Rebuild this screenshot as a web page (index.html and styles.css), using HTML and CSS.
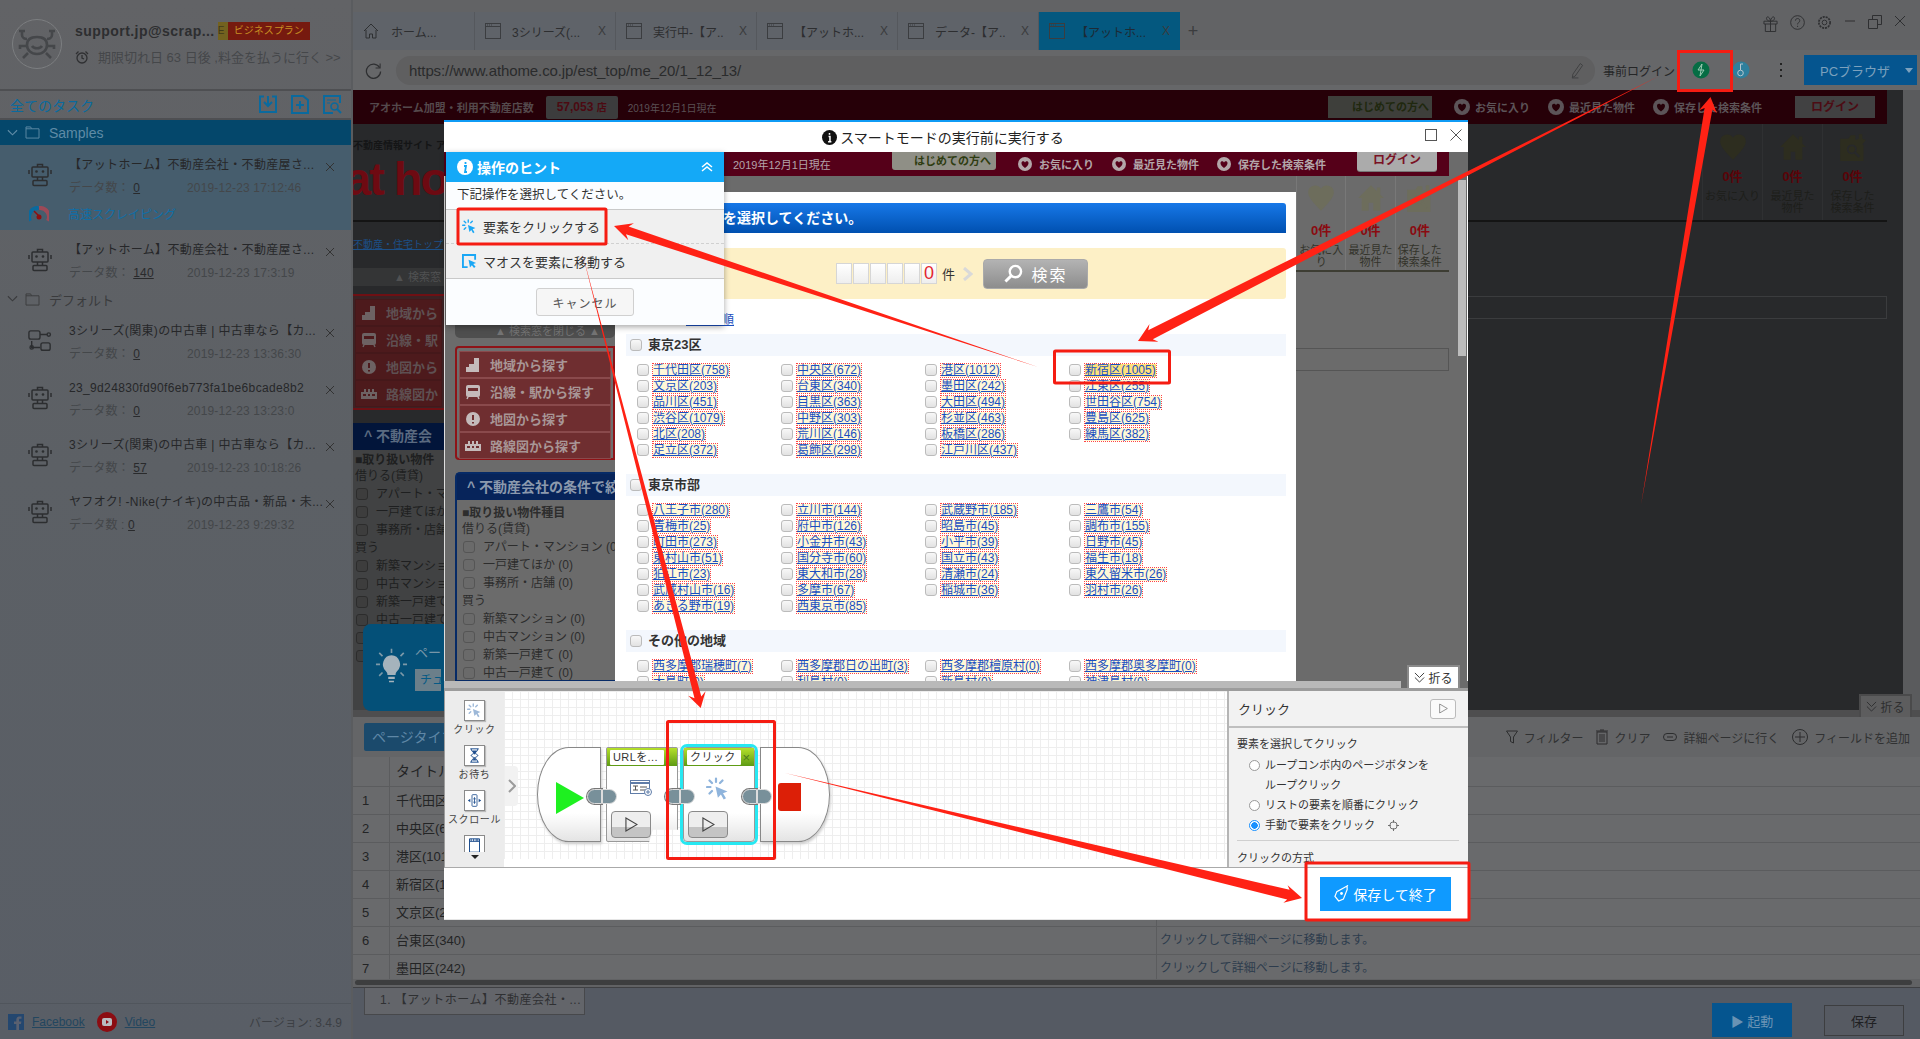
FILE: index.html
```html
<!DOCTYPE html>
<html lang="ja">
<head>
  <meta charset="UTF-8">
  <title>スマートモード</title>
  <link rel="stylesheet" href="styles.css">
</head>
<body>
  <svg class="defs" width="0" height="0">
    <symbol id="i-robot" viewBox="0 0 24 24"><g fill="none" stroke="currentColor" stroke-width="1.5"><path d="M9.5 4V1.500h5V4"/><rect x="4" y="4" width="16" height="10" rx="1"/><path d="M1 7v4M23 7v4M9.500 14v3.500M14.500 14v3.500"/><rect x="5" y="17.500" width="14" height="5" rx="1"/></g><circle cx="8.500" cy="8.500" r="1.300" fill="currentColor"/><circle cx="15" cy="8.500" r="1.300" fill="currentColor"/></symbol>
    <symbol id="i-flow" viewBox="0 0 26 24"><g fill="none" stroke="currentColor" stroke-width="1.500"><rect x="1" y="1" width="12" height="9" rx="2"/><path d="M13 5h8M4 12v7h9"/><circle cx="22.500" cy="5" r="1.800"/><circle cx="4" cy="19" r="1.800"/><rect x="14" y="14" width="10" height="8" rx="2"/></g></symbol>
    <symbol id="i-folder" viewBox="0 0 16 14"><path d="M1 1h5l1 2h8v10H1z" fill="none" stroke="currentColor"/><path d="M1 3h6" stroke="currentColor"/></symbol>
    <symbol id="i-close" viewBox="0 0 10 10"><path d="M1 1l8 8M9 1l-8 8" stroke="currentColor" fill="none"/></symbol>
    <symbol id="i-chev" viewBox="0 0 12 8"><path d="M1 1l5 5 5-5" stroke="currentColor" stroke-width="1.200" fill="none"/></symbol>
    <symbol id="i-dchev" viewBox="0 0 12 12"><path d="M1 1l5 5 5-5M1 6l5 5 5-5" stroke="currentColor" fill="none"/></symbol>
    <symbol id="i-page" viewBox="0 0 16 16"><rect x=".5" y=".5" width="15" height="15" fill="none" stroke="currentColor"/><path d="M.5 3.500h15" stroke="currentColor"/><path d="M2 2h1M4 2h1M6 2h1" stroke="currentColor"/></symbol>
    <symbol id="i-click" viewBox="0 0 24 24"><g stroke="currentColor" stroke-width="2.200" stroke-linecap="round" fill="none"><path d="M10 1.500v3.500M3.500 3.500l2.500 2.500M1 10h3.500M3.500 16.500l2.500-2.500M16.500 3.500L14 6"/></g><path d="M9.500 9.500l12 5-4.500 1.800 3 5-2.300 1.300-2.800-5-3 3.200z" fill="currentColor"/></symbol>
    <symbol id="i-play" viewBox="0 0 14 16"><path d="M1 1l12 7-12 7z" fill="none" stroke="currentColor" stroke-width="1.200"/></symbol>
    <symbol id="i-heart" viewBox="0 0 24 24"><path d="M12 23C6 16 1 12 1 7a6 6 0 0 1 11-3 6 6 0 0 1 11 3c0 5-5 9-11 16z" fill="currentColor"/></symbol>
    <symbol id="i-house" viewBox="0 0 24 24"><path d="M12 1L1 12h3v11h6v-7h4v7h6V12h3l-3-3V3h-3v3z" fill="currentColor"/></symbol>
    <symbol id="i-savedoc" viewBox="0 0 24 24"><path d="M1 5h7l2-3h4v4l3-1v-4h3v4l3 1-4 5v-1h2v14H1z" fill="currentColor"/><circle cx="11" cy="14" r="3.500" fill="none" stroke="var(--hole)" stroke-width="1.500"/><path d="M13.500 16.500l4 4" stroke="var(--hole)" stroke-width="2"/></symbol>
    <symbol id="i-round" viewBox="0 0 14 14"><circle cx="7" cy="7" r="7" fill="currentColor"/><path d="M7 11C4 9 3.500 7 3.500 6 3.500 4 6 3.500 7 5.500 8 3.500 10.500 4 10.500 6 10.500 7 10 9 7 11z" fill="var(--hole-head)"/></symbol>
    <symbol id="w-area" viewBox="0 0 16 16"><path d="M9 1h5v14H1v-5h3V7h5z" fill="currentColor"/></symbol>
    <symbol id="w-train" viewBox="0 0 16 16"><path d="M3 1h10a2 2 0 0 1 2 2v8a2 2 0 0 1-2 2H3a2 2 0 0 1-2-2V3a2 2 0 0 1 2-2z" fill="currentColor"/><path d="M3 4h10v3H3z" fill="var(--hole-way)"/><path d="M3 13l-1 2M13 13l1 2" stroke="currentColor" stroke-width="1.500"/></symbol>
    <symbol id="w-pin" viewBox="0 0 16 16"><circle cx="8" cy="8" r="7" fill="currentColor"/><path d="M8 4v5M8 11v1.500" stroke="var(--hole-way)" stroke-width="2"/></symbol>
    <symbol id="w-rail" viewBox="0 0 16 16"><path d="M0 6h16v7H0z" fill="currentColor"/><path d="M3 3h2v3H3zM7 3h2v3H7zM11 3h2v3h-2z" fill="currentColor"/><path d="M2 8h3v2H2zM7 8h2v2H7zM11 8h3v2h-3z" fill="var(--hole-way)"/></symbol>
  </svg>

  <div class="app">
    <aside class="sidebar">
      <div class="account">
        <div class="avatar">
          <svg viewBox="0 0 50 50" width="50" height="50"><circle cx="25" cy="25" r="24.500" fill="none" stroke="#7c7e80"/><g fill="none" stroke="#45474a" stroke-width="2.600"><path d="M15 26c0-5 3-8 10-8s10 3 10 8-4 9-10 9-10-4-10-9z"/><path d="M10 11v5c0 3 3 4 5 4M40 11v5c0 3-3 4-5 4M7 12h6M37 12h6M15 27H8v3M35 27h7v3M16 34l-5 5M34 34l5 5"/><path d="M20 27c2 3 8 3 10 0"/></g></svg>
        </div>
        <div class="account-info">
          <div class="account-name"><b>support.jp@scrap...</b><span class="plan"><i>E</i><em>ビジネスプラン</em></span></div>
          <div class="account-note">
            <svg viewBox="0 0 14 14" width="14" height="14"><circle cx="7" cy="8" r="5" fill="none" stroke="#2f3032" stroke-width="1.300"/><path d="M7 5v3l2 1M1 4l2.500-2.500M13 4l-2.500-2.500" stroke="#2f3032" stroke-width="1.300" fill="none"/></svg>
            <span>期限切れ日 63 日後 ,料金を払うに行く &gt;&gt;</span>
          </div>
        </div>
      </div>

      <div class="task-head">
        <span>全てのタスク</span>
        <div class="task-tools">
          <svg viewBox="0 0 20 19" width="20" height="19"><path d="M6 1.500H2v15.500h16V1.500h-4" fill="none" stroke="#0a6a9e" stroke-width="2"/><path d="M10 1v9M6 7l4 4 4-4" fill="none" stroke="#0a6a9e" stroke-width="2"/></svg>
          <svg viewBox="0 0 20 19" width="20" height="19"><path d="M2 1h11l5 4v13H2z" fill="none" stroke="#0a6a9e" stroke-width="2"/><path d="M10 6v8M6 10h8" stroke="#0a6a9e" stroke-width="2"/></svg>
          <svg viewBox="0 0 20 19" width="20" height="19"><path d="M18 8V1H2v17h9" fill="none" stroke="#0a6a9e" stroke-width="2"/><path d="M5 5h9M5 8h3" stroke="#0a6a9e"/><circle cx="12.500" cy="11.500" r="3.500" fill="none" stroke="#0a6a9e" stroke-width="1.600"/><path d="M15 14l4 4" stroke="#0a6a9e" stroke-width="2"/></svg>
        </div>
      </div>

      <div class="folder open"><svg class="chev"><use href="#i-chev"/></svg><svg class="folder-icon"><use href="#i-folder"/></svg><span>Samples</span></div>

      <div class="task selected">
        <svg class="task-icon"><use href="#i-robot"/></svg>
        <div class="task-title">【アットホーム】不動産会社・不動産屋さ...</div>
        <svg class="task-close"><use href="#i-close"/></svg>
        <div class="task-meta"><span class="task-count">データ数： <u>0</u></span><span class="task-date">2019-12-23 17:12:46</span></div>
        <div class="task-speed">
          <svg viewBox="0 0 20 16" width="20" height="16"><path d="M1 15a9 9 0 0 1 9-13" fill="none" stroke="#0a6a9e" stroke-width="4"/><path d="M10 2a9 9 0 0 1 9 13" fill="none" stroke="#9c4a58" stroke-width="4"/><path d="M5 5l6 6" stroke="#8e1010" stroke-width="1.500"/><circle cx="10" cy="11" r="2.500" fill="#8e1010"/></svg>
          <span>高速スクレイピング</span>
        </div>
      </div>
      <div class="task">
        <svg class="task-icon"><use href="#i-robot"/></svg>
        <div class="task-title">【アットホーム】不動産会社・不動産屋さ...</div>
        <svg class="task-close"><use href="#i-close"/></svg>
        <div class="task-meta"><span class="task-count">データ数： <u>140</u></span><span class="task-date">2019-12-23 17:3:19</span></div>
      </div>

      <div class="folder"><svg class="chev"><use href="#i-chev"/></svg><svg class="folder-icon"><use href="#i-folder"/></svg><span>デフォルト</span></div>

      <div class="task">
        <svg class="task-icon"><use href="#i-flow"/></svg>
        <div class="task-title">3シリーズ(関東)の中古車 | 中古車なら【カ...</div>
        <svg class="task-close"><use href="#i-close"/></svg>
        <div class="task-meta"><span class="task-count">データ数： <u>0</u></span><span class="task-date">2019-12-23 13:36:30</span></div>
      </div>
      <div class="task">
        <svg class="task-icon"><use href="#i-robot"/></svg>
        <div class="task-title">23_9d24830fd90f6eb773fa1be6bcade8b2</div>
        <svg class="task-close"><use href="#i-close"/></svg>
        <div class="task-meta"><span class="task-count">データ数： <u>0</u></span><span class="task-date">2019-12-23 13:23:0</span></div>
      </div>
      <div class="task">
        <svg class="task-icon"><use href="#i-robot"/></svg>
        <div class="task-title">3シリーズ(関東)の中古車 | 中古車なら【カ...</div>
        <svg class="task-close"><use href="#i-close"/></svg>
        <div class="task-meta"><span class="task-count">データ数： <u>57</u></span><span class="task-date">2019-12-23 10:18:26</span></div>
      </div>
      <div class="task">
        <svg class="task-icon"><use href="#i-robot"/></svg>
        <div class="task-title">ヤフオク! -Nike(ナイキ)の中古品・新品・未...</div>
        <svg class="task-close"><use href="#i-close"/></svg>
        <div class="task-meta"><span class="task-count">データ数 : <u>0</u></span><span class="task-date">2019-12-23 9:29:32</span></div>
      </div>

      <div class="side-foot">
        <svg viewBox="0 0 16 16" width="16" height="16"><rect width="16" height="16" fill="#24476f"/><path d="M11 16v-6h2l.4-2.500H11V6c0-.8.300-1.200 1.200-1.200h1.300V2.500c-.5 0-1.200-.1-1.900-.1-2 0-3.300 1.200-3.300 3.300v1.800H6V10h2.300v6z" fill="#596070"/></svg>
        <a class="foot-link">Facebook</a>
        <svg viewBox="0 0 20 20" width="20" height="20"><circle cx="10" cy="10" r="10" fill="#8c0d12"/><rect x="5" y="6" width="10" height="8" rx="2" fill="#b9bcc0"/><path d="M9 8l3 2-3 2z" fill="#8c0d12"/></svg>
        <a class="foot-link">Video</a>
        <span class="version">バージョン: 3.4.9</span>
      </div>
    </aside>

    <main class="browser">
      <div class="tabs">
        <div class="tab home">
          <svg viewBox="0 0 16 16" width="16" height="16"><path d="M1 8l7-7 7 7M3 7v8h3.500v-4h3v4H13V7" fill="none" stroke="#2e3032"/></svg>
          <span>ホーム...</span>
        </div>
        <div class="tab"><svg class="tab-icon"><use href="#i-page"/></svg><span>3シリーズ(...</span><b>X</b></div>
        <div class="tab"><svg class="tab-icon"><use href="#i-page"/></svg><span>実行中-【ア..</span><b>X</b></div>
        <div class="tab"><svg class="tab-icon"><use href="#i-page"/></svg><span>【アットホ...</span><b>X</b></div>
        <div class="tab"><svg class="tab-icon"><use href="#i-page"/></svg><span>データ-【ア..</span><b>X</b></div>
        <div class="tab active"><svg class="tab-icon"><use href="#i-page"/></svg><span>【アットホ...</span><b>X</b></div>
        <div class="tab-add">+</div>
        <div class="win-tools">
          <svg viewBox="0 0 16 18" width="15" height="18"><path d="M1 6h14v3H1zM2.500 9v8h11V9M8 6v11M8 6C5 6 3 4 4 2s4 1 4 4c0-3 3-6 4-4s-1 4-4 4" fill="none" stroke="#2e2f31"/></svg>
          <svg viewBox="0 0 16 16" width="15" height="15"><circle cx="8" cy="8" r="7.300" fill="none" stroke="#2e2f31"/><path d="M5.800 6c0-3 4.600-3 4.600 0 0 2-2.300 2-2.300 4M8.100 11.500v1.300" fill="none" stroke="#2e2f31"/></svg>
          <svg viewBox="0 0 16 16" width="15" height="15"><circle cx="8" cy="8" r="2.500" fill="none" stroke="#2e2f31"/><circle cx="8" cy="8" r="6" fill="none" stroke="#2e2f31" stroke-width="1.800" stroke-dasharray="2.200 1"/></svg>
          <svg viewBox="0 0 12 12" width="12" height="12"><path d="M1 6h10" stroke="#2e2f31"/></svg>
          <svg viewBox="0 0 14 14" width="14" height="14"><path d="M.5 4.500h9v9h-9zM4.500 4.500v-4h9v9h-4" fill="none" stroke="#2e2f31"/></svg>
          <svg viewBox="0 0 12 12" width="12" height="12"><path d="M1 1l10 10M11 1L1 11" stroke="#2e2f31"/></svg>
        </div>
      </div>

      <div class="address">
        <svg class="reload" viewBox="0 0 18 18" width="17" height="17"><path d="M15.500 6A7.500 7.500 0 1 0 16.500 10" fill="none" stroke="#2e2f31" stroke-width="1.300"/><path d="M16 1.500V6.300h-4.800" fill="none" stroke="#2e2f31" stroke-width="1.100"/></svg>
        <div class="url-pill">
          <span>https://www.athome.co.jp/est_top/me_20/1_12_13/</span>
          <svg viewBox="0 0 14 18" width="13" height="17"><path d="M10 1.500l2.500 2-8 11.500-3 1.500.5-3.500zM1 17h7" fill="none" stroke="#3e3f40"/></svg>
        </div>
        <span class="prelogin">事前ログイン</span>
        <span class="addr-icon"><svg viewBox="0 0 18 18" width="18" height="18"><circle cx="9" cy="9" r="8.500" fill="#066d44"/><path d="M10 3L6 9h3l-1 6 4-6H9z" fill="none" stroke="#9ecbb5"/></svg></span>
        <span class="addr-icon"><svg viewBox="0 0 18 18" width="18" height="18"><circle cx="9" cy="9" r="8.500" fill="#2f7f9c"/><circle cx="8.500" cy="12" r="2.800" fill="none" stroke="#b4c6cf"/><path d="M8.500 9V3h2.500" fill="none" stroke="#b4c6cf"/></svg></span>
        <span class="kebab"><i></i><i></i><i></i></span>
        <div class="pc-btn"><span>PCブラウザ</span><i></i></div>
      </div>

      <div class="page">
        <div class="page-header">
          <b class="hd-title">アオホーム加盟・利用不動産店数</b>
          <span class="hd-count">57,053 <small>店</small></span>
          <span class="hd-date">2019年12月1日現在</span>
          <span class="hd-spacer"></span>
          <span class="hd-first">はじめての方へ</span>
          <span class="hd-link"><svg><use href="#i-round"/></svg>お気に入り</span>
          <span class="hd-link"><svg><use href="#i-round"/></svg>最近見た物件</span>
          <span class="hd-link"><svg><use href="#i-round"/></svg>保存した検索条件</span>
          <span class="hd-login">ログイン</span>
        </div>
        <div class="page-body">
          <div class="strip outer">
            <div class="tagline">不動産情報サイト ア</div>
            <div class="logo">at ho</div>
            <div class="rule"></div>
            <a class="crumb">不動産・住宅トップ</a>
            <div class="close-band">▲ 検索窓</div>
            <div class="search-ways">
              <div><svg><use href="#w-area"/></svg>地域から</div>
              <div><svg><use href="#w-train"/></svg>沿線・駅</div>
              <div><svg><use href="#w-pin"/></svg>地図から</div>
              <div><svg><use href="#w-rail"/></svg>路線図か</div>
            </div>
            <div class="cond-head">^ 不動産会</div>
            <div class="cond-list">
              <b>■取り扱い物件</b>
              <div>借りる(賃貸)</div>
              <label><i></i>アパート・マ</label>
              <label><i></i>一戸建てほか</label>
              <label><i></i>事務所・店舗</label>
              <div>買う</div>
              <label><i></i>新築マンショ</label>
              <label><i></i>中古マンショ</label>
              <label><i></i>新築一戸建て</label>
              <label><i></i>中古一戸建て</label>
              <label><i></i>土地</label>
              <label><i></i>店舗</label>
            </div>
          </div>
          <div class="cards outer-cards">
            <div class="cards-row">
              <div class="card"><svg class="heart"><use href="#i-heart"/></svg><em>0件</em><span>お気に入り</span></div>
              <div class="card"><svg class="heart"><use href="#i-house"/></svg><em>0件</em><span>最近見た<br>物件</span></div>
              <div class="card"><svg class="heart"><use href="#i-savedoc"/></svg><em>0件</em><span>保存した<br>検索条件</span></div>
            </div>
            <div class="blank-box"></div>
          </div>
          <div class="page-scroll"></div>
          <div class="tip-card">
            <svg viewBox="0 0 40 44" width="33" height="36"><g stroke="#7d99a8" stroke-width="2" fill="none"><path d="M20 1v5M5 6l4 4M35 6l-4 4M1 20h5M34 20h5M9 30l-4 4M31 30l4 4"/></g><path d="M20 9a11 11 0 0 0-7 19c2 2 2 4 2 5h10c0-1 0-3 2-5a11 11 0 0 0-7-19zM16 35h8v3h-8zM17 40h6v2h-6z" fill="#a5b3bc"/></svg>
            <div><div class="tip-title">ペー</div><span class="tip-btn">チュ</span></div>
          </div>
        </div>
        <div class="fold-tab outer-fold"><svg><use href="#i-dchev"/></svg>折る</div>
      </div>

      <div class="data-bar"></div>
      <div class="data-tools">
        <span class="page-type">ページタイプ</span>
        <span class="dt-spacer"></span>
        <span class="dt-item"><svg viewBox="0 0 12 14" width="12" height="14"><path d="M.5 1h11L7.500 7v6l-3-1.500V7z" fill="none" stroke="#2c2d2e"/></svg>フィルター</span>
        <span class="dt-item"><svg viewBox="0 0 12 16" width="12" height="16"><path d="M1 3h10v12H1zM0 2h12M4 1h4M4 5v8M6 5v8M8 5v8" fill="none" stroke="#2c2d2e"/></svg>クリア</span>
        <span class="dt-item"><svg viewBox="0 0 14 10" width="14" height="10"><rect x=".5" y="1.500" width="13" height="7" rx="3.500" fill="none" stroke="#2c2d2e"/><path d="M4 5h6" stroke="#2c2d2e"/></svg>詳細ページに行く</span>
        <span class="dt-item"><svg viewBox="0 0 16 16" width="16" height="16"><circle cx="8" cy="8" r="7.500" fill="none" stroke="#2c2d2e"/><path d="M8 3v10M3 8h10" stroke="#2c2d2e"/></svg>フィールドを追加</span>
      </div>
      <div class="data-table">
        <div class="dt-row dt-header"><span></span><span>タイトル</span><span></span></div>
        <div class="dt-row"><span>1</span><span>千代田区(758)</span><span>クリックして詳細ページに移動します。</span></div>
        <div class="dt-row"><span>2</span><span>中央区(672)</span><span>クリックして詳細ページに移動します。</span></div>
        <div class="dt-row"><span>3</span><span>港区(1012)</span><span>クリックして詳細ページに移動します。</span></div>
        <div class="dt-row"><span>4</span><span>新宿区(1005)</span><span>クリックして詳細ページに移動します。</span></div>
        <div class="dt-row"><span>5</span><span>文京区(203)</span><span>クリックして詳細ページに移動します。</span></div>
        <div class="dt-row"><span>6</span><span>台東区(340)</span><span>クリックして詳細ページに移動します。</span></div>
        <div class="dt-row"><span>7</span><span>墨田区(242)</span><span>クリックして詳細ページに移動します。</span></div>
      </div>
      <div class="h-scroll"><i></i></div>
      <div class="run-bar">
        <div class="doc-tab">1. 【アットホーム】不動産会社・...</div>
        <span class="dt-spacer"></span>
        <button class="run-btn">▶ 起動</button>
        <button class="save-btn">保存</button>
      </div>
    </main>
  </div>

  <div class="dialog">
    <div class="dlg-title">
      <svg viewBox="0 0 16 16" width="15" height="15"><circle cx="8" cy="8" r="8" fill="#111"/><path d="M8 3.200v1.800M7 7h1.500v5.500M6.500 12.500h3.500" stroke="#fff" stroke-width="1.600" fill="none"/></svg>
      <span>スマートモードの実行前に実行する</span>
      <i class="dlg-max"></i>
      <svg class="dlg-close" viewBox="0 0 12 12" width="12" height="12"><path d="M.5.500l11 11M11.500.500l-11 11" stroke="#555"/></svg>
    </div>

    <div class="frame">
      <div class="frame-header">
        <span class="hd-date light">2019年12月1日現在</span>
        <span class="hd-first light">はじめての方へ</span>
        <span class="hd-link light"><svg><use href="#i-round"/></svg>お気に入り</span>
        <span class="hd-link light"><svg><use href="#i-round"/></svg>最近見た物件</span>
        <span class="hd-link light"><svg><use href="#i-round"/></svg>保存した検索条件</span>
        <span class="hd-login light">ログイン</span>
      </div>
      <div class="frame-body">
        <div class="strip inner">
          <div class="close-band">▲ 検索窓を閉じる ▲</div>
          <div class="search-ways">
            <div><svg><use href="#w-area"/></svg>地域から探す</div>
            <div><svg><use href="#w-train"/></svg>沿線・駅から探す</div>
            <div><svg><use href="#w-pin"/></svg>地図から探す</div>
            <div><svg><use href="#w-rail"/></svg>路線図から探す</div>
          </div>
          <div class="cond-box">
            <div class="cond-head">^ 不動産会社の条件で絞</div>
            <div class="cond-list">
              <b>■取り扱い物件種目</b>
              <div>借りる(賃貸)</div>
              <label><i></i>アパート・マンション (0)</label>
              <label><i></i>一戸建てほか (0)</label>
              <label><i></i>事務所・店舗 (0)</label>
              <div>買う</div>
              <label><i></i>新築マンション (0)</label>
              <label><i></i>中古マンション (0)</label>
              <label><i></i>新築一戸建て (0)</label>
              <label><i></i>中古一戸建て (0)</label>
            </div>
          </div>
        </div>

        <div class="area-panel">
          <div class="banner">市区郡を選択してください。</div>
          <div class="hit-box">
            <span class="digit"></span><span class="digit"></span><span class="digit"></span><span class="digit"></span><span class="digit"></span><span class="digit zero">0</span>
            <span class="hit-unit">件</span>
            <svg viewBox="0 0 10 14" width="10" height="14"><path d="M1 1l7 6-7 6" fill="none" stroke="#d9d9d9" stroke-width="3"/></svg>
            <button class="search-btn"><svg viewBox="0 0 20 20" width="19" height="19"><circle cx="12" cy="8" r="6" fill="none" stroke="#fff" stroke-width="2.500"/><path d="M7.500 12.500L1.500 18.500" stroke="#fff" stroke-width="3"/></svg>検索</button>
          </div>
          <div class="kana-link"><a>五十音順</a></div>

          <div class="group-head"><i class="cb"></i><span>東京23区</span></div>
          <div class="area-grid">
            <label><i class="cb"></i><a>千代田区(758)</a></label><label><i class="cb"></i><a>中央区(672)</a></label><label><i class="cb"></i><a>港区(1012)</a></label><label><i class="cb"></i><a class="hot">新宿区(1005)</a></label>
            <label><i class="cb"></i><a>文京区(203)</a></label><label><i class="cb"></i><a>台東区(340)</a></label><label><i class="cb"></i><a>墨田区(242)</a></label><label><i class="cb"></i><a>江東区(255)</a></label>
            <label><i class="cb"></i><a>品川区(451)</a></label><label><i class="cb"></i><a>目黒区(363)</a></label><label><i class="cb"></i><a>大田区(494)</a></label><label><i class="cb"></i><a>世田谷区(754)</a></label>
            <label><i class="cb"></i><a>渋谷区(1079)</a></label><label><i class="cb"></i><a>中野区(303)</a></label><label><i class="cb"></i><a>杉並区(463)</a></label><label><i class="cb"></i><a>豊島区(625)</a></label>
            <label><i class="cb"></i><a>北区(208)</a></label><label><i class="cb"></i><a>荒川区(146)</a></label><label><i class="cb"></i><a>板橋区(286)</a></label><label><i class="cb"></i><a>練馬区(382)</a></label>
            <label><i class="cb"></i><a>足立区(372)</a></label><label><i class="cb"></i><a>葛飾区(298)</a></label><label><i class="cb"></i><a>江戸川区(437)</a></label>
          </div>

          <div class="group-head"><i class="cb"></i><span>東京市部</span></div>
          <div class="area-grid">
            <label><i class="cb"></i><a>八王子市(280)</a></label><label><i class="cb"></i><a>立川市(144)</a></label><label><i class="cb"></i><a>武蔵野市(185)</a></label><label><i class="cb"></i><a>三鷹市(54)</a></label>
            <label><i class="cb"></i><a>青梅市(25)</a></label><label><i class="cb"></i><a>府中市(126)</a></label><label><i class="cb"></i><a>昭島市(45)</a></label><label><i class="cb"></i><a>調布市(155)</a></label>
            <label><i class="cb"></i><a>町田市(273)</a></label><label><i class="cb"></i><a>小金井市(43)</a></label><label><i class="cb"></i><a>小平市(39)</a></label><label><i class="cb"></i><a>日野市(45)</a></label>
            <label><i class="cb"></i><a>東村山市(51)</a></label><label><i class="cb"></i><a>国分寺市(60)</a></label><label><i class="cb"></i><a>国立市(43)</a></label><label><i class="cb"></i><a>福生市(18)</a></label>
            <label><i class="cb"></i><a>狛江市(23)</a></label><label><i class="cb"></i><a>東大和市(28)</a></label><label><i class="cb"></i><a>清瀬市(24)</a></label><label><i class="cb"></i><a>東久留米市(26)</a></label>
            <label><i class="cb"></i><a>武蔵村山市(16)</a></label><label><i class="cb"></i><a>多摩市(67)</a></label><label><i class="cb"></i><a>稲城市(36)</a></label><label><i class="cb"></i><a>羽村市(26)</a></label>
            <label><i class="cb"></i><a>あきる野市(19)</a></label><label><i class="cb"></i><a>西東京市(85)</a></label>
          </div>

          <div class="group-head"><i class="cb"></i><span>その他の地域</span></div>
          <div class="area-grid">
            <label><i class="cb"></i><a>西多摩郡瑞穂町(7)</a></label><label><i class="cb"></i><a>西多摩郡日の出町(3)</a></label><label><i class="cb"></i><a>西多摩郡檜原村(0)</a></label><label><i class="cb"></i><a>西多摩郡奥多摩町(0)</a></label>
            <label><i class="cb"></i><a>大島町(0)</a></label><label><i class="cb"></i><a>利島村(0)</a></label><label><i class="cb"></i><a>新島村(0)</a></label><label><i class="cb"></i><a>神津島村(0)</a></label>
          </div>
        </div>

        <div class="cards inner-cards">
          <div class="cards-row">
            <div class="card"><svg class="heart"><use href="#i-heart"/></svg><em>0件</em><span>お気に入り</span></div>
            <div class="card"><svg class="heart"><use href="#i-house"/></svg><em>0件</em><span>最近見た<br>物件</span></div>
            <div class="card"><svg class="heart"><use href="#i-savedoc"/></svg><em>0件</em><span>保存した<br>検索条件</span></div>
          </div>
          <div class="blank-box"></div>
        </div>
        <div class="frame-scroll"><i></i></div>
      </div>
    </div>

    <div class="split"><i></i></div>

    <div class="workspace">
      <div class="tool-list">
        <div class="tool"><span class="tool-box blue"><svg><use href="#i-click"/></svg></span><span>クリック</span></div>
        <div class="tool"><span class="tool-box">
          <svg viewBox="0 0 16 18"><path d="M3 1h10M3 17h10M4 1c0 5 8 6 8 8s-8 3-8 8M12 1c0 5-8 6-8 8s8 3 8 8" fill="none" stroke="#1f4f8f" stroke-width="1.200"/><path d="M5 3h6l-3 5zM5 15l3-3 3 3z" fill="#1f4f8f"/></svg></span><span>お待ち</span></div>
        <div class="tool"><span class="tool-box"><svg viewBox="0 0 18 18"><rect x="6" y="2" width="6" height="14" rx="1" fill="none" stroke="#1f4f8f"/><path d="M9 5v8M7.500 7h3M7.500 11h3" stroke="#1f4f8f"/><path d="M4 7L1 9l3 2zM14 7l3 2-3 2z" fill="#1f4f8f"/></svg></span><span>スクロール</span></div>
        <div class="tool clipped"><span class="tool-box"><svg viewBox="0 0 18 18"><path d="M3 1h12v16H3zM5 1v3M8 1v3M11 1v3M13 1v3M3 4h12" fill="none" stroke="#1f4f8f" stroke-width="1.200"/></svg></span></div>
        <div class="tool-more"></div>
      </div>
      <div class="canvas">
        <div class="grip"><svg viewBox="0 0 8 14" width="8" height="14"><path d="M1 1l6 6-6 6" fill="none" stroke="#9b9b9b" stroke-width="2"/></svg></div>

        <div class="block start"><i class="start-tri"></i></div>
        <div class="block step url-step">
          <div class="step-head"><span>URLを...</span></div>
          <svg class="step-icon" viewBox="0 0 22 16" width="22" height="16"><rect x=".5" y=".5" width="19" height="13" fill="#fff" stroke="#5f7ca8"/><path d="M.5 3h19" stroke="#5f7ca8" stroke-width="2"/><path d="M3 6h5M5.500 6v4M3 10h5M10 7h7M10 10h5" stroke="#555"/><circle cx="18" cy="12" r="3.500" fill="#fff" stroke="#5f7ca8"/><path d="M18 10v4M16 12h4" stroke="#5f7ca8"/></svg>
          <span class="step-play"><svg viewBox="0 0 14 16" width="13" height="15"><use href="#i-play"/></svg></span>
        </div>
        <div class="block step click-step">
          <div class="step-head"><span>クリック</span><b>×</b></div>
          <svg class="step-icon burst"><use href="#i-click"/></svg>
          <span class="step-play"><svg viewBox="0 0 14 16" width="13" height="15"><use href="#i-play"/></svg></span>
        </div>
        <div class="block stop"><i class="stop-sq"></i></div>

        <div class="plug p1"><i></i><i></i></div>
        <div class="plug p2"><i></i><i></i></div>
        <div class="plug p3"><i></i><i></i></div>
      </div>
      <div class="props">
        <div class="props-head"><span>クリック</span><span class="props-play"><svg viewBox="0 0 14 16" width="9" height="11"><use href="#i-play"/></svg></span></div>
        <div class="props-body">
          <p>要素を選択してクリック</p>
          <label class="radio"><i></i><span>ループコンボ内のページボタンを<br>ループクリック</span></label>
          <label class="radio"><i></i><span>リストの要素を順番にクリック</span></label>
          <label class="radio on"><i></i><span>手動で要素をクリック</span><svg viewBox="0 0 12 12" width="11" height="11"><circle cx="6" cy="6" r="4" fill="none" stroke="#666"/><path d="M6 0v3M6 9v3M0 6h3M9 6h3" stroke="#666"/></svg></label>
          <div class="props-rule"></div>
          <p>クリックの方式</p>
        </div>
      </div>
    </div>

    <div class="dlg-foot">
      <button class="finish-btn">
        <svg viewBox="0 0 16 18" width="15" height="17"><path d="M14 1L3 7 1 12l4 5 5-2 4-10z" fill="none" stroke="#fff" stroke-width="1.300"/><circle cx="8" cy="9" r="1.500" fill="#fff"/><path d="M14 1l1-1" stroke="#fff"/></svg>
        保存して終了
      </button>
    </div>

    <div class="fold-tab inner-fold"><svg><use href="#i-dchev"/></svg>折る</div>

    <div class="hint">
      <div class="hint-head">
        <svg viewBox="0 0 16 16" width="16" height="16"><circle cx="8" cy="8" r="8" fill="#fff"/><path d="M8.500 3v2M7 7h2l-1 6h2" stroke="#14a9f7" stroke-width="1.800" fill="none"/></svg>
        <span>操作のヒント</span>
        <svg class="hint-up" viewBox="0 0 12 10" width="12" height="10"><path d="M1 5l5-4 5 4M1 9l5-4 5 4" fill="none" stroke="#fff" stroke-width="1.500"/></svg>
      </div>
      <div class="hint-msg">下記操作を選択してください。</div>
      <div class="hint-opt first"><svg class="opt-icon"><use href="#i-click"/></svg><span>要素をクリックする</span></div>
      <div class="hint-opt"><svg class="opt-icon" viewBox="0 0 16 16"><path d="M14 6V1H1v13h5" fill="none" stroke="#1aa7f5" stroke-width="2"/><path d="M7 6l8 3.500-3 1.200 2.500 3-1.700 1.300-2.300-3-2 2.500z" fill="#1aa7f5"/></svg><span>マオスを要素に移動する</span></div>
      <div class="hint-foot"><button>キャンセル</button></div>
    </div>
  </div>

  <svg class="marks" viewBox="0 0 1920 1039" width="1920" height="1039">
    <g fill="none" stroke="#f51c12" stroke-width="3">
      <rect x="1678.500" y="51.500" width="53" height="39"/>
      <rect x="458" y="209" width="148" height="35" rx="1"/>
      <rect x="1054.500" y="351" width="115" height="32" rx="1"/>
      <rect x="667.500" y="721.500" width="107" height="137" rx="1"/>
      <rect x="1306" y="863" width="163" height="57" rx="1"/>
    </g>
    <g fill="#ff2215">
      <polygon points="1038,367 628.600,226.600 633.900,223.200 614,226 628.300,240.200 626,234.200"/>
      <polygon points="1659,76 1152.800,339.200 1158.500,341.700 1138,341 1149.500,323.900 1148.200,330.200"/>
      <polygon points="1641,505 1712.400,109.500 1716.900,113.300 1710.500,97 1699.100,110.300 1704.600,108.100"/>
      <polygon points="582,252 701.300,696.500 705.600,691.200 700.700,708 688.200,695.800 694.500,698.300"/>
      <polygon points="785,773 1287.200,899.600 1283.400,902.700 1302,898 1287.600,885.300 1289.600,889.800"/>
    </g>
  </svg>
</body>
</html>
```
FILE: styles.css
```css
* {
  margin: 0;
  padding: 0;
  box-sizing: border-box;
}

html, body {
  width: 1920px;
  height: 1039px;
  overflow: hidden;
}

body {
  position: relative;
  font-family: "Liberation Sans", "Noto Sans CJK JP", sans-serif;
  font-size: 13px;
  color: #2a2b2c;
  background: #5f6163;
}

i, em {
  font-style: normal;
}

button {
  font-family: inherit;
  border: none;
}

.defs {
  position: absolute;
}

.app {
  display: flex;
  width: 1920px;
  height: 1039px;
}

/* sidebar */
.sidebar {
  width: 353px;
  height: 1039px;
  flex: none;
  display: flex;
  flex-direction: column;
  background: linear-gradient(to bottom, #626366, #5c6065 45%, #595e66);
  border-right: 2px solid #5a5c5f;
}

.account {
  height: 91px;
  flex: none;
  display: flex;
  align-items: center;
  padding: 0 0 1px 12px;
  gap: 13px;
  border-bottom: 2px solid #4e4f52;
}

.avatar {
  width: 50px;
  height: 50px;
}

.account-name {
  display: flex;
  align-items: center;
  height: 18px;
  font-size: 14px;
  letter-spacing: .45px;
  color: #2d2e30;
}

.plan {
  display: flex;
  height: 18px;
  margin-left: 3px;
  font-size: 10px;
  line-height: 18px;
  letter-spacing: 0;
}

.plan i {
  width: 10px;
  background: #73621f;
  color: #3f3a1a;
}

.plan em {
  width: 82px;
  text-align: center;
  background: #761a0f;
  color: #c78f22;
}

.account-note {
  display: flex;
  align-items: center;
  gap: 9px;
  margin-top: 7px;
  color: #45474a;
}

.task-head {
  height: 29px;
  flex: none;
  display: flex;
  align-items: center;
  justify-content: space-between;
  padding: 0 9px 0 10px;
  font-size: 14px;
  color: #0a6a9e;
  border-bottom: 2px solid #4e4f52;
}

.task-tools {
  display: flex;
  gap: 12px;
}

.folder {
  height: 24px;
  flex: none;
  display: flex;
  align-items: center;
  padding-left: 7px;
  color: #3a3b3d;
}

.folder.open {
  height: 25px;
  background: #04476b;
  color: #5f8ba6;
  font-size: 14px;
}

.chev {
  width: 11px;
  height: 8px;
  margin-right: 7px;
}

.folder-icon {
  width: 15px;
  height: 13px;
  margin-right: 9px;
}

.task {
  position: relative;
  height: 57px;
  flex: none;
}

.task.selected {
  height: 85px;
  background: #465d6d;
}

.task-icon {
  position: absolute;
  left: 28px;
  top: 18px;
  width: 24px;
  height: 24px;
  color: #2c2e30;
}

.task-title {
  position: absolute;
  left: 69px;
  top: 11px;
  width: 245px;
  line-height: 18px;
  font-size: 12px;
  letter-spacing: .35px;
  white-space: nowrap;
  color: #262729;
}

.task-close {
  position: absolute;
  left: 325px;
  top: 17px;
  width: 10px;
  height: 10px;
  color: #333;
}

.task-meta {
  position: absolute;
  left: 69px;
  top: 34px;
  line-height: 18px;
  font-size: 12px;
  letter-spacing: .15px;
  color: #44474a;
  white-space: nowrap;
}

.task-count {
  display: inline-block;
  width: 118px;
}

.task-count u {
  color: #292a2c;
}

.task-speed {
  position: absolute;
  left: 29px;
  top: 60px;
  display: flex;
  align-items: center;
  gap: 19px;
  font-size: 12px;
  color: #0f6ea6;
}

.side-foot {
  margin-top: auto;
  height: 36px;
  flex: none;
  display: flex;
  align-items: center;
  padding: 0 9px 0 8px;
  border-top: 1px solid #50555c;
  font-size: 12px;
}

.foot-link {
  margin: 0 10px 0 8px;
  color: #23465f;
  text-decoration: underline;
}

.foot-link + svg {
  margin-left: 2px;
}

.version {
  margin-left: auto;
  color: #3c3f44;
}

/* browser chrome */
.browser {
  flex: 1;
  min-width: 0;
  display: flex;
  flex-direction: column;
  background: #67686a;
  --hole: #28292b;
  --hole-head: #260008;
  --hole-way: #4d1a1c;
}

.tabs {
  height: 50px;
  flex: none;
  display: flex;
  align-items: flex-end;
  background: #626365;
  font-size: 12px;
  color: #2d2e30;
}

.tab {
  width: 141px;
  height: 38px;
  display: flex;
  align-items: center;
  padding-left: 10px;
  gap: 11px;
  background: #5f6369;
  border-right: 1px solid #55585d;
}

.tab span {
  width: 75px;
  white-space: nowrap;
}

.tab b {
  font-weight: 400;
  color: #3a3b3d;
}

.tab.home {
  width: 122px;
  gap: 12px;
}

.tab.active {
  background: #04587f;
  color: #1d2a35;
  border: none;
}

.tab-icon {
  width: 16px;
  height: 16px;
  flex: none;
  color: #3b3d40;
}

.tab-add {
  width: 26px;
  height: 38px;
  line-height: 38px;
  text-align: center;
  font-size: 18px;
  color: #3b3c3e;
}

.win-tools {
  margin-left: auto;
  height: 38px;
  display: flex;
  align-items: flex-start;
  padding-right: 14px;
  gap: 12px;
}

.win-tools svg {
  margin-top: 3px;
}

.address {
  height: 40px;
  flex: none;
  display: flex;
  align-items: center;
  background: #666769;
}

.reload {
  margin: 0 6px 0 12px;
}

.url-pill {
  width: 1199px;
  height: 29px;
  margin-left: 8px;
  display: flex;
  align-items: center;
  justify-content: space-between;
  padding: 0 11px 0 13px;
  border-radius: 15px;
  background: #5f5f60;
  font-size: 15px;
  letter-spacing: -.1px;
  color: #2a2b2c;
}

.prelogin {
  margin-left: 8px;
  font-size: 12px;
  color: #252627;
}

.addr-icon {
  width: 18px;
  margin-left: 17px;
  display: flex;
}

.addr-icon + .addr-icon {
  margin-left: 22px;
}

.kebab {
  display: flex;
  flex-direction: column;
  gap: 4px;
  margin-left: 30px;
}

.kebab i {
  width: 2px;
  height: 2px;
  background: #222;
}

.pc-btn {
  width: 113px;
  height: 30px;
  margin-left: 22px;
  display: flex;
  align-items: center;
  justify-content: space-between;
  padding: 0 4px 0 16px;
  background: #05558f;
  color: #7ca1bd;
  font-size: 13px;
}

.pc-btn i {
  border: 4px solid transparent;
  border-top: 5px solid #7ca1bd;
  margin-top: 5px;
}

/* page behind the dialog */
.page {
  position: relative;
  height: 620px;
  flex: none;
  background: #28292b;
}

.page-header {
  display: flex;
  align-items: center;
  width: 1534px;
  height: 34px;
  padding: 0 12px 0 16px;
  background: #260008;
  color: #5c5458;
  font-size: 11px;
  white-space: nowrap;
}

.hd-title {
  color: #54494c;
}

.hd-count {
  width: 72px;
  margin: 0 10px 0 12px;
  text-align: center;
  line-height: 22px;
  border-radius: 2px;
  background: #3c3c3d;
  color: #4c0a12;
  font-weight: 700;
  font-size: 12px;
}

.hd-date {
  color: #5a5054;
  font-size: 10px;
}

.hd-spacer,
.dt-spacer {
  flex: 1;
}

.hd-first {
  width: 104px;
  padding-left: 24px;
  line-height: 22px;
  background: #3e3f3b;
  color: #20280f;
  font-weight: 700;
  margin-right: 22px;
}

.hd-link {
  display: flex;
  align-items: center;
  gap: 5px;
  margin-right: 18px;
  font-weight: 700;
  font-size: 11px;
  white-space: nowrap;
}

.hd-link svg {
  width: 16px;
  height: 16px;
  flex: none;
}

.hd-login {
  width: 80px;
  margin-left: 15px;
  text-align: center;
  line-height: 22px;
  background: #414142;
  color: #4c0c14;
  font-weight: 700;
  font-size: 12px;
}

.page-body {
  display: flex;
  height: 586px;
}

.strip {
  flex: none;
  overflow: hidden;
  white-space: nowrap;
}

.strip.outer {
  width: 91px;
  color: #1e1f20;
}

.tagline {
  padding-top: 14px;
  line-height: 16px;
  font-size: 10px;
  font-weight: 700;
  color: #141516;
}

.logo {
  margin: 4px 0 0 -8px;
  font-size: 47px;
  line-height: 42px;
  font-weight: 700;
  letter-spacing: -2px;
  color: #6e0a12;
}

.rule {
  height: 2px;
  margin-top: 20px;
  background: #141414;
}

.crumb {
  display: block;
  margin-top: 16px;
  height: 14px;
  line-height: 14px;
  font-size: 10px;
  color: #1c4f86;
  text-decoration: underline;
}

.close-band {
  height: 18px;
  margin-top: 16px;
  padding-left: 41px;
  line-height: 18px;
  font-size: 11px;
  background: #343536;
  color: #505152;
}

.search-ways {
  margin-top: 8px;
  height: 116px;
  padding: 3px 2px;
  border-top: 2px solid #6e1014;
  border-bottom: 2px solid #6e1014;
  background: #3c2224;
}

.search-ways div {
  display: flex;
  align-items: center;
  gap: 9px;
  height: 27px;
  padding-left: 5px;
  font-size: 13px;
  font-weight: 700;
  color: #5e5052;
  border: 1px solid #45181a;
  background: #4d1a1c;
}

.search-ways svg {
  width: 16px;
  height: 16px;
  flex: none;
  color: #6d6263;
}

.cond-head {
  height: 27px;
  margin-top: 13px;
  padding-left: 11px;
  line-height: 27px;
  font-size: 14px;
  font-weight: 700;
  background: #02153a;
  color: #5a6a80;
}

.outer .cond-list {
  padding-top: 1px;
  background: #414243;
  height: 267px;
}

.cond-list {
  padding-left: 2px;
  font-size: 12px;
  line-height: 18px;
  color: #1e1f20;
}

.cond-list b {
  display: block;
  font-size: 12px;
  height: 16px;
  line-height: 18px;
}

.cond-list label {
  display: flex;
  align-items: center;
  gap: 8px;
  height: 18px;
  padding-left: 1px;
}

.cond-list label i {
  width: 12px;
  height: 12px;
  border-radius: 3px;
  border: 1px solid #2c2c2c;
  background: #3d3d3d;
  flex: none;
}

.cards {
  flex: 1;
  position: relative;
}

.cards-row {
  display: flex;
  justify-content: flex-end;
  height: 98px;
  padding-right: 5px;
  border-bottom: 2px solid #141414;
}

.outer-cards .cards-row,
.outer-cards .blank-box {
  width: 420px;
  margin-left: 1023px;
}

.card {
  width: 60px;
  display: flex;
  flex-direction: column;
  align-items: center;
  padding-top: 8px;
  border-left: 1px solid #2f3032;
  font-size: 11px;
  line-height: 12px;
  text-align: center;
  color: #1d1e1a;
}

.heart {
  width: 28px;
  height: 30px;
  color: #2d2d1f;
}

.card em {
  margin: 8px 0 6px;
  font-size: 13px;
  line-height: 14px;
  color: #5b0308;
  font-weight: 700;
}

.blank-box {
  height: 23px;
  margin-top: 74px;
  border: 1px solid #3b3c3e;
  border-left: none;
}

.page-scroll {
  position: absolute;
  right: 0;
  top: 0;
  bottom: 0;
  width: 17px;
  background: #5a5b5d;
}

.tip-card {
  position: absolute;
  left: 10px;
  top: 534px;
  width: 81px;
  height: 87px;
  display: flex;
  gap: 7px;
  padding: 24px 0 0 12px;
  border-radius: 8px 0 0 8px;
  background: #045078;
  color: #7796a8;
  white-space: nowrap;
}

.tip-title {
  margin-top: -6px;
  font-size: 13px;
}

.tip-btn {
  display: inline-block;
  width: 26px;
  margin-top: 8px;
  padding-left: 5px;
  line-height: 22px;
  background: #6b7f8a;
  color: #055a85;
  font-size: 12px;
}

.fold-tab {
  position: absolute;
  width: 53px;
  height: 23px;
  display: flex;
  align-items: center;
  justify-content: center;
  gap: 3px;
  font-size: 12px;
  white-space: nowrap;
}

.fold-tab svg {
  width: 11px;
  height: 11px;
  flex: none;
}

.outer-fold {
  right: 8px;
  bottom: -7px;
  background: #5d5d5e;
  border: 2px solid #4a4a4b;
  border-bottom: none;
  color: #2d2e2f;
}

.data-bar {
  height: 7px;
  flex: none;
  background: #4e4e4f;
}

.data-tools {
  height: 40px;
  flex: none;
  display: flex;
  align-items: center;
  padding: 0 10px 0 11px;
  gap: 13px;
  background: #646567;
  color: #303132;
  font-size: 12px;
}

.page-type {
  width: 120px;
  height: 28px;
  line-height: 28px;
  padding-left: 8px;
  border-radius: 2px;
  background: #1b4a6c;
  color: #5f87a6;
  font-size: 14px;
  white-space: nowrap;
}

.dt-item {
  display: flex;
  align-items: center;
  gap: 6px;
  white-space: nowrap;
}

.data-table {
  flex: 1;
  min-height: 0;
  overflow: hidden;
  background: #696a6c;
}

.dt-row {
  display: grid;
  grid-template-columns: 37px 767px 1fr;
  height: 28px;
  align-items: stretch;
  border-bottom: 1px solid #5b5c5e;
  font-size: 13px;
  line-height: 27px;
  color: #232425;
}

.dt-row span {
  border-right: 1px solid #5b5c5e;
  padding-left: 6px;
  white-space: nowrap;
}

.dt-row span:first-child {
  padding-left: 9px;
}

.dt-row span:nth-child(3) {
  padding-left: 3px;
  border-right: none;
  font-size: 12px;
  color: #2d3c4d;
}

.dt-header {
  height: 30px;
  font-size: 14px;
  line-height: 29px;
}

.h-scroll {
  height: 8px;
  flex: none;
  padding: 1px 8px 0 2px;
  background: #616264;
}

.h-scroll i {
  display: block;
  height: 5px;
  border-radius: 3px;
  background: #3d3e3f;
}

.run-bar {
  height: 52px;
  flex: none;
  display: flex;
  align-items: flex-start;
  padding: 0 16px 0 11px;
  border-top: 1px solid #3f4043;
  background: #555a63;
}

.doc-tab {
  width: 221px;
  height: 27px;
  line-height: 25px;
  padding-left: 15px;
  background: #63656a;
  border: 1px solid #47484b;
  border-top: none;
  font-size: 12px;
  letter-spacing: .5px;
  white-space: nowrap;
  color: #2f3032;
}

.run-btn {
  width: 80px;
  height: 34px;
  margin-top: 15px;
  background: #05558f;
  color: #6a93b4;
  font-size: 13px;
}

.save-btn {
  width: 80px;
  height: 31px;
  margin: 17px 0 0 32px;
  background: #565a62;
  border: 1px solid #3d3e40;
  color: #1f2022;
  font-size: 13px;
}

/* dialog */
.dialog {
  position: absolute;
  z-index: 1;
  left: 444px;
  top: 120px;
  width: 1024px;
  height: 800px;
  display: flex;
  flex-direction: column;
  background: #fff;
  border-top: 2px solid #0f9bf5;
}

.dlg-title {
  position: relative;
  height: 30px;
  flex: none;
  display: flex;
  align-items: center;
  justify-content: center;
  gap: 3px;
  padding-right: 26px;
  font-size: 14px;
  color: #222;
}

.dlg-max {
  position: absolute;
  left: 981px;
  top: 7px;
  width: 12px;
  height: 12px;
  border: 1px solid #555;
}

.dlg-close {
  position: absolute;
  left: 1006px;
  top: 7px;
}

.frame {
  height: 529px;
  flex: none;
  display: flex;
  flex-direction: column;
  background: #6b6b6b;
  --hole: #6d6d5c;
  --hole-head: #550019;
  --hole-way: #6f2e30;
}

.frame-header {
  height: 24px;
  flex: none;
  width: 1005px;
  display: flex;
  align-items: center;
  padding: 0 12px 0 289px;
  background: #550019;
  font-size: 11px;
  white-space: nowrap;
}

.hd-date.light {
  width: 159px;
  font-size: 11px;
  color: #b3a3a9;
}

.hd-first.light {
  height: 18px;
  align-self: flex-start;
  padding-left: 22px;
  line-height: 18px;
  border-radius: 0 0 3px 3px;
  background: #8f8f86;
  color: #2f3d12;
  font-size: 11px;
}

.hd-link.light {
  color: #b3a6a9;
  gap: 7px;
}

.hd-link.light svg {
  width: 14px;
  height: 14px;
}

.hd-login.light {
  align-self: flex-start;
  margin-left: auto;
  height: 19px;
  line-height: 17px;
  border-radius: 0 0 3px 3px;
  background: #ababab;
  box-shadow: 0 1px 0 #777;
  color: #7a1224;
}

.frame-body {
  flex: 1;
  min-height: 0;
  display: flex;
}

.strip.inner {
  width: 171px;
  padding: 149px 0 0 10px;
  border-left: 1px solid #ddd;
  color: #2c2c2c;
}

.inner .close-band {
  margin-top: 0;
  height: 13px;
  line-height: 13px;
  border-radius: 0 0 5px 5px;
  padding-left: 40px;
  background: #4e4e4e;
  color: #747474;
}

.inner .search-ways {
  margin-top: 8px;
  height: 114px;
  padding: 3px 2px;
  border: 2px solid #8e1317;
  border-radius: 4px 0 0 4px;
  background: #6e6e6e;
}

.inner .search-ways div {
  color: #a89696;
  border-color: #8a4a4c;
  background: #6f2e30;
}

.inner .search-ways svg {
  color: #c4baba;
}

.cond-box {
  margin-top: 12px;
  border: 2px solid #062a66;
  border-right: none;
  border-radius: 5px 0 0 0;
  height: 210px;
}

.inner .cond-head {
  margin: 0;
  background: #07245a;
  color: #8b99ad;
  padding-left: 10px;
  height: 26px;
  line-height: 26px;
}

.inner .cond-list {
  padding: 4px 0 0 5px;
  color: #2d2d2d;
}

.inner .cond-list label i {
  border-color: #555;
  background: #6a6a6a;
}

.area-panel {
  position: relative;
  z-index: 1;
  width: 681px;
  flex: none;
  height: 489px;
  margin-top: 16px;
  padding: 11px 0 0 11px;
  overflow: hidden;
  background: #fff;
  color: #333;
}

.banner {
  width: 660px;
  height: 30px;
  line-height: 30px;
  padding-left: 55px;
  border-radius: 3px 3px 0 0;
  background: linear-gradient(to bottom, #1778e8, #0050b0);
  color: #fff;
  font-size: 14px;
  font-weight: 700;
}

.hit-box {
  width: 660px;
  height: 51px;
  margin-top: 15px;
  display: flex;
  align-items: center;
  padding-left: 210px;
  gap: 1px;
  border-radius: 3px;
  background: #fdf0c6;
}

.digit {
  width: 16px;
  height: 21px;
  border: 1px solid #d6d6d6;
  background: linear-gradient(to bottom, #fff, #eee);
  font-size: 18px;
  line-height: 19px;
  text-align: center;
}

.zero {
  color: #e3262e;
}

.hit-unit {
  margin: 0 7px 0 4px;
  font-size: 13px;
}

.search-btn {
  width: 105px;
  height: 30px;
  margin-left: 9px;
  display: flex;
  align-items: center;
  justify-content: center;
  gap: 9px;
  border-radius: 4px;
  border: 1px solid #aaa;
  background: linear-gradient(to bottom, #b3b3b3, #8d8d8d);
  color: #fff;
  font-size: 16px;
  letter-spacing: 2px;
}

.kana-link {
  height: 35px;
  padding: 14px 0 0 60px;
  font-size: 12px;
  line-height: 14px;
}

.kana-link a {
  color: #1a4fc0;
  text-decoration: underline;
}

.group-head {
  width: 660px;
  height: 22px;
  display: flex;
  align-items: center;
  gap: 6px;
  padding-left: 4px;
  background: #f3f7fd;
  font-size: 13px;
  font-weight: 700;
  color: #333;
}

.group-head span {
  margin-top: -4px;
}

.cb {
  width: 12px;
  height: 12px;
  flex: none;
  border: 1px solid #bbb;
  border-radius: 3px;
  background: linear-gradient(to bottom, #f8f8f8, #e2e2e2);
}

.area-grid {
  display: grid;
  grid-template-columns: repeat(4, 144px);
  grid-auto-rows: 16px;
  padding: 6px 0 16px 11px;
}

.area-grid label {
  display: flex;
  align-items: center;
  gap: 4px;
}

.area-grid a {
  line-height: 13px;
  font-size: 12px;
  white-space: nowrap;
  background: #fff8d8;
  outline: 1px dotted #f44;
  color: #1a4fc0;
  text-decoration: underline;
}

.area-grid a.hot {
  background: #ffe27a;
}

.inner-cards {
  width: 153px;
  flex: none;
}

.inner-cards .cards-row {
  border-bottom: 2px solid #3d3d33;
  height: 96px;
}

.inner-cards .card {
  border-left: 1px solid #787878;
  color: #33332a;
}

.inner-cards .heart {
  margin-top: -1px;
  color: #6d6d5c;
}

.inner-cards .card em {
  margin-top: 11px;
  color: #8a0a10;
}

.inner-cards .blank-box {
  margin-top: 76px;
  border-color: #555;
}

.frame-scroll {
  flex: 1;
  padding: 4px 0 0 9px;
  border-right: 1px solid #fff;
}

.frame-scroll i {
  display: block;
  width: 8px;
  height: 176px;
  background: #bcbcbc;
}

.split {
  height: 10px;
  flex: none;
  background: #6b6b6b;
  border-bottom: 3px solid #9c9c9c;
}

.split i {
  display: block;
  width: 957px;
  height: 7px;
  background: #b9b9b9;
}

.workspace {
  height: 177px;
  flex: none;
  display: flex;
  border-bottom: 1px solid #aaa;
  border-left: 1px solid #9c9c9c;
}

.tool-list {
  position: relative;
  width: 59px;
  flex: none;
  display: flex;
  flex-direction: column;
  align-items: center;
  padding-top: 9px;
  background: #ececec;
  overflow: hidden;
  font-size: 10px;
  color: #444;
}

.tool {
  height: 45px;
  display: flex;
  flex-direction: column;
  align-items: center;
  white-space: nowrap;
  letter-spacing: .6px;
}

.tool span + span {
  margin-top: 1px;
  line-height: 15px;
}

.tool-box {
  width: 21px;
  height: 21px;
  flex: none;
  padding: 2px;
  background: #fff;
  border: 1px solid #8a8a8a;
  box-shadow: 1px 1px 1px #bbb;
}

.tool-box svg {
  display: block;
  width: 100%;
  height: 100%;
}

.tool-box.blue {
  color: #9db8d8;
}

.tool.clipped {
  height: 17px;
  overflow: hidden;
}

.tool-more {
  position: absolute;
  left: 26px;
  bottom: 8px;
  border: 4px solid transparent;
  border-top: 4px solid #222;
  border-bottom: none;
}

.canvas {
  position: relative;
  width: 723px;
  flex: none;
  background:
    linear-gradient(to bottom, transparent 168px, #fff 168px),
    linear-gradient(#eee 1px, transparent 1px) 0 0 / 8px 8px,
    linear-gradient(90deg, #eee 1px, transparent 1px) 0 0 / 8px 8px,
    #fff;
}

.grip {
  position: absolute;
  left: 1px;
  top: 75px;
  width: 13px;
  height: 40px;
  display: flex;
  align-items: center;
  justify-content: center;
  border-radius: 0 4px 4px 0;
  background: #f2f2f2;
}

.block {
  position: absolute;
  top: 56px;
  height: 95px;
  background: linear-gradient(to bottom, #fff 70%, #e4e4e4);
  box-shadow: 1px 2px 3px #ccc;
}

.start {
  left: 33px;
  width: 64px;
  border: 1px solid #888;
  border-radius: 32px 0 0 32px / 48px 0 0 48px;
}

.start-tri {
  position: absolute;
  left: 18px;
  top: 34px;
  border-left: 28px solid #1ef020;
  border-top: 16px solid transparent;
  border-bottom: 16px solid transparent;
}

.step {
  width: 72px;
  border: 1px solid #999;
  border-radius: 2px;
  clip-path: polygon(0 0, 100% 0, 100% 87%, 65% 87%, 60% 100%, 0 100%);
}

.url-step {
  left: 102px;
}

.click-step {
  left: 179px;
  box-shadow: 0 0 0 3px #27e8f2;
  clip-path: none;
  border-radius: 4px;
}

.step-head {
  display: flex;
  align-items: center;
  justify-content: space-between;
  height: 18px;
  padding: 2px 2px 1px 3px;
  background: linear-gradient(to bottom, #b5e02a, #5d9a14);
}

.step-head span {
  width: 54px;
  height: 15px;
  padding-left: 3px;
  background: #fff;
  border-radius: 1px;
  font-size: 11px;
  line-height: 15px;
  letter-spacing: .4px;
  color: #333;
  white-space: nowrap;
}

.step-head b {
  margin-right: 2px;
  font-weight: 400;
  font-size: 13px;
  line-height: 14px;
  color: #4e7a1e;
}

.step-icon {
  position: absolute;
  left: 23px;
  top: 32px;
}

.step-icon.burst {
  left: 22px;
  top: 29px;
  width: 24px;
  height: 24px;
  color: #8fb4dc;
}

.step-play {
  position: absolute;
  left: 4px;
  top: 63px;
  width: 40px;
  height: 27px;
  display: flex;
  align-items: center;
  justify-content: center;
  border: 1px solid #8a8a8a;
  border-radius: 4px;
  background: linear-gradient(to bottom, #eee 60%, #c4c4c4 60%);
  color: #444;
}

.stop {
  left: 256px;
  width: 70px;
  border: 1px solid #888;
  border-radius: 0 32px 32px 0 / 0 48px 48px 0;
}

.stop-sq {
  position: absolute;
  left: 17px;
  top: 35px;
  width: 23px;
  height: 28px;
  border-radius: 3px 0 0 3px;
  background: #dc1f07;
}

.plug {
  position: absolute;
  top: 98px;
  display: flex;
}

.plug i {
  width: 15px;
  height: 15px;
  background: #78909a;
  border: 1px solid #ddd;
  border-radius: 8px 0 0 8px;
  box-shadow: 0 0 0 1px #777;
}

.plug i + i {
  border-radius: 0 8px 8px 0;
  box-shadow: none;
}

.p1 {
  left: 83px;
}

.p2 {
  left: 161px;
}

.p3 {
  left: 238px;
}

.props {
  flex: 1;
  border-left: 2px solid #b5b5b5;
  background: #f2f2f2;
  font-size: 11px;
  color: #333;
}

.props-head {
  height: 37px;
  display: flex;
  align-items: center;
  justify-content: space-between;
  padding: 0 12px 0 9px;
  border-bottom: 2px solid #bfbfbf;
  font-size: 13px;
}

.props-play {
  width: 26px;
  height: 20px;
  display: flex;
  align-items: center;
  justify-content: center;
  border: 1px solid #bbb;
  border-radius: 3px;
  background: #fafafa;
  color: #777;
}

.props-body {
  padding: 8px 9px 0 8px;
}

.props-body p {
  line-height: 16px;
}

.radio {
  display: flex;
  align-items: flex-start;
  gap: 5px;
  padding-left: 12px;
  line-height: 20px;
}

.props-body p + .radio {
  margin-top: 3px;
}

.radio i {
  width: 11px;
  height: 11px;
  margin-top: 5px;
  flex: none;
  border: 1px solid #999;
  border-radius: 50%;
  background: #fff;
}

.radio.on i {
  border: 1px solid #1890ff;
  background: radial-gradient(circle, #1890ff 3px, #fff 3.500px);
}

.radio svg {
  margin: 5px 0 0 8px;
}

.props-rule {
  height: 1px;
  margin: 5px 0 9px;
  background: #cfcfcf;
}

.dlg-foot {
  flex: 1;
  display: flex;
  align-items: center;
  justify-content: flex-end;
  padding: 0 17px 0 0;
  border-bottom: 1px solid #e5e5e5;
}

.finish-btn {
  width: 131px;
  height: 34px;
  display: flex;
  align-items: center;
  justify-content: center;
  gap: 4px;
  background: #0f9aff;
  color: #fff;
  font-size: 14px;
}

.inner-fold {
  left: 963px;
  top: 543px;
  background: #fff;
  border: 2px solid #8a8a8a;
  border-bottom: none;
  color: #333;
}

/* hint popup */
.hint {
  position: absolute;
  z-index: 2;
  left: 2px;
  top: 30px;
  width: 278px;
  height: 173px;
  background: #fbfdff;
  box-shadow: 0 2px 6px rgba(0, 0, 0, .35);
  color: #333;
}

.hint-head {
  height: 30px;
  display: flex;
  align-items: center;
  gap: 4px;
  padding: 0 11px;
  background: #14a9f7;
  color: #fff;
  font-size: 14px;
  font-weight: 700;
}

.hint-up {
  margin-left: auto;
}

.hint-msg {
  height: 28px;
  line-height: 27px;
  padding-left: 11px;
  font-size: 12.500px;
  border-bottom: 1px solid #c9c9c9;
}

.hint-opt {
  height: 35px;
  display: flex;
  align-items: center;
  gap: 6px;
  padding-left: 16px;
  background: #f0f0f0;
  font-size: 13px;
}

.hint-opt.first {
  height: 34px;
  border-bottom: 1px dashed #d0d0d0;
}

.hint-opt + .hint-opt {
  border-bottom: 1px solid #c9c9c9;
}

.opt-icon {
  width: 15px;
  height: 15px;
  color: #1aa7f5;
}

.hint-foot {
  padding: 9px 0 0 90px;
}

.hint-foot button {
  width: 98px;
  height: 28px;
  border: 1px solid #d0d0d0;
  border-radius: 3px;
  background: #f6f6f6;
  color: #555;
  font-size: 12px;
  letter-spacing: 1px;
}

/* annotations drawn on the screenshot */
.marks {
  position: absolute;
  z-index: 2;
  left: 0;
  top: 0;
  pointer-events: none;
}
```
